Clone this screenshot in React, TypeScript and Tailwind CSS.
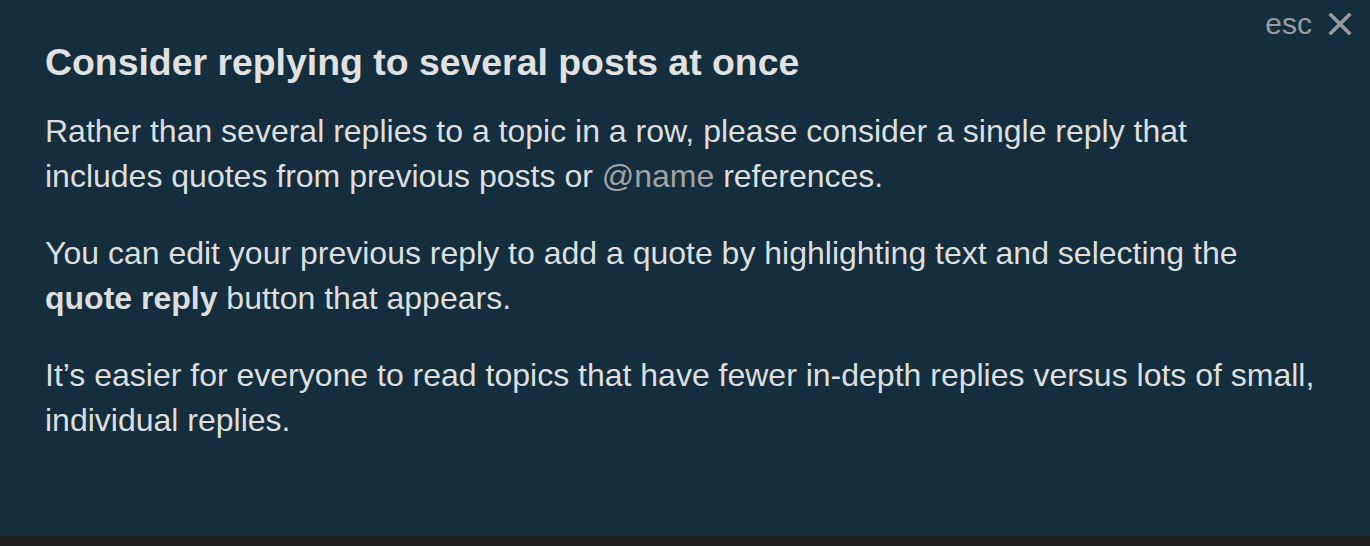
export default function App() {
  return (
    <div className="flex h-[546px] w-[1370px] flex-col bg-[#202020] font-['Liberation_Sans',Arial,sans-serif]">
      <div className="relative h-[536px] bg-[#142e3e] pl-[45px] pr-[40px] pt-[41px]">
        <div className="absolute right-[18px] top-[8px] flex items-center gap-[16px] text-[#9b9b9b]">
          <span className="text-[30px] leading-[32px]">esc</span>
          <svg width="24" height="22" viewBox="0 0 24 22" fill="none" stroke="currentColor" strokeWidth="3.6" strokeLinecap="square">
            <path d="M3 2 L21 20 M21 2 L3 20" />
          </svg>
        </div>
        <h3 className="mb-[25px] text-[37.4px] font-bold leading-[43px] text-[#e1e1e1]">
          Consider replying to several posts at once
        </h3>
        <div className="text-[32px] leading-[45px] text-[#dedede]">
          <p className="mb-[32px]">
            Rather than several replies to a topic in a row, please consider a single reply that
            <br />
            includes quotes from previous posts or <span className="text-[#a3a3a3]">@name</span> references.
          </p>
          <p className="mb-[32px]">
            You can edit your previous reply to add a quote by highlighting text and selecting the{" "}
            <strong className="font-bold">quote reply</strong> button that appears.
          </p>
          <p>
            It’s easier for everyone to read topics that have fewer in-depth replies versus lots of small, individual replies.
          </p>
        </div>
      </div>
    </div>
  );
}
